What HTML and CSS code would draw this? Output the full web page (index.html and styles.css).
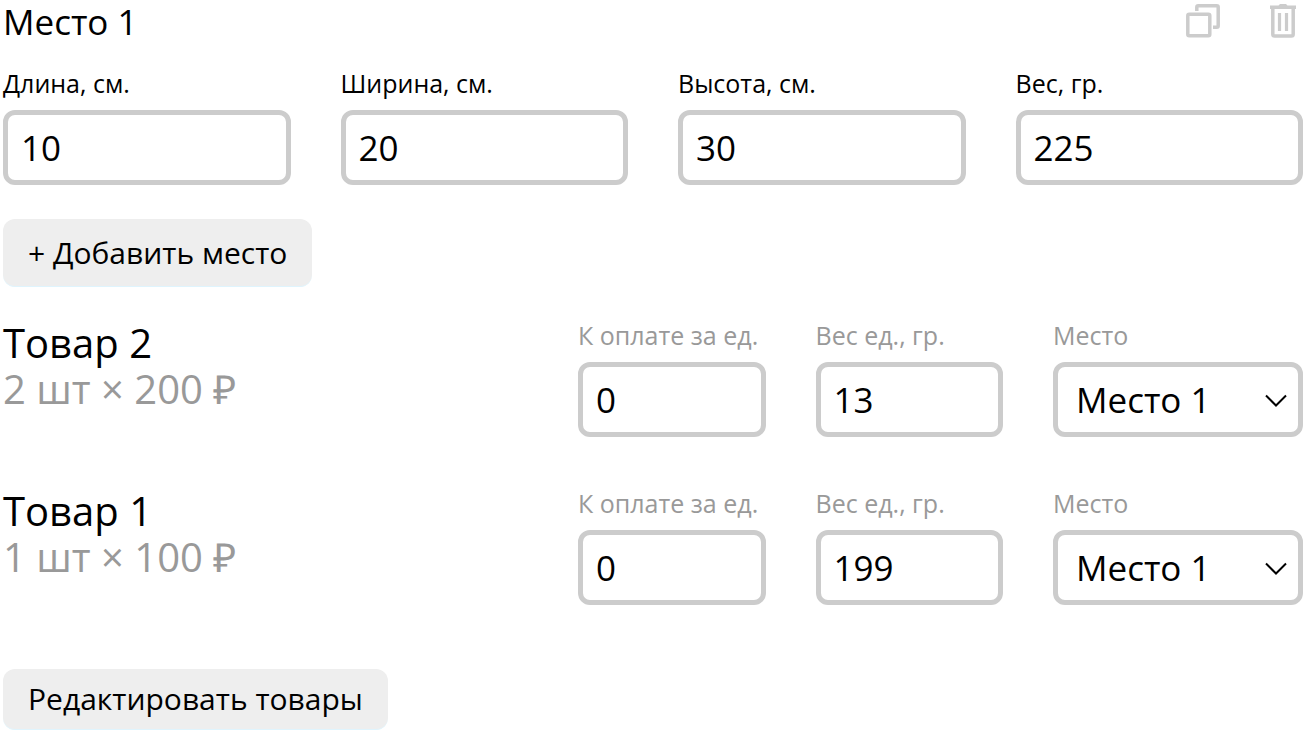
FILE: index.html
```html
<!DOCTYPE html>
<html lang="ru">
<head>
    <meta charset="UTF-8">
    <meta name="viewport" content="width=device-width, initial-scale=1.0">
    <title>Места и товары</title>
    <link rel="stylesheet" href="styles.css">
</head>
<body>

<form class="container">
    <div class="place-header">
        <h2 class="place-title">Место 1</h2>
        <div class="place-actions">
            <button type="button" class="icon-button" aria-label="Копировать место">
                <svg width="34" height="34" viewBox="0 0 34 34" fill="none" stroke="#ccc" stroke-width="3.5">
                    <rect x="1.800" y="10.200" width="22" height="21.600" rx="1.500"/>
                    <path d="M10.800 7V3.300a1.500 1.500 0 0 1 1.500-1.500h18.400a1.500 1.500 0 0 1 1.500 1.500v18.400a1.500 1.500 0 0 1-1.500 1.500H27"/>
                </svg>
            </button>
            <button type="button" class="icon-button" aria-label="Удалить место">
                <svg width="28" height="34" viewBox="0 0 28 34" fill="none" stroke="#ccc">
                    <path d="M1 1.500h8.500l1.500-1.500h6l1.500 1.500H27V5H1z" fill="#ccc" stroke="none"/>
                    <path d="M3.800 4v26.200a1.800 1.800 0 0 0 1.800 1.800h16.800a1.800 1.800 0 0 0 1.800-1.800V4" stroke-width="3.5"/>
                    <path d="M10.500 9v18M17.500 9v18" stroke-width="3.2"/>
                </svg>
            </button>
        </div>
    </div>

    <div class="place-fields">
        <div class="field">
            <label for="length">Длина, см.</label>
            <input type="text" id="length" value="10">
        </div>
        <div class="field">
            <label for="width">Ширина, см.</label>
            <input type="text" id="width" value="20">
        </div>
        <div class="field">
            <label for="height">Высота, см.</label>
            <input type="text" id="height" value="30">
        </div>
        <div class="field">
            <label for="weight">Вес, гр.</label>
            <input type="text" id="weight" value="225">
        </div>
    </div>

    <button type="button" class="button button-add">+ Добавить место</button>

    <div class="items">
        <div class="item">
            <div class="item-info">
                <div class="item-name">Товар 2</div>
                <div class="item-price">2 шт × 200 <span class="ruble">₽</span></div>
            </div>
            <div class="item-fields">
                <div class="field">
                    <label for="pay2">К оплате за ед.</label>
                    <input type="text" id="pay2" value="0">
                </div>
                <div class="field">
                    <label for="weight2">Вес ед., гр.</label>
                    <input type="text" id="weight2" value="13">
                </div>
                <div class="field">
                    <label for="place2">Место</label>
                    <div class="select">
                        <select id="place2">
                            <option>Место 1</option>
                        </select>
                        <svg class="arrow" width="22" height="14" viewBox="0 0 22 14" fill="none" stroke="#000" stroke-width="2"><path d="M1 1.500l10 10 10-10"/></svg>
                    </div>
                </div>
            </div>
        </div>

        <div class="item">
            <div class="item-info">
                <div class="item-name">Товар 1</div>
                <div class="item-price">1 шт × 100 <span class="ruble">₽</span></div>
            </div>
            <div class="item-fields">
                <div class="field">
                    <label for="pay1">К оплате за ед.</label>
                    <input type="text" id="pay1" value="0">
                </div>
                <div class="field">
                    <label for="weight1">Вес ед., гр.</label>
                    <input type="text" id="weight1" value="199">
                </div>
                <div class="field">
                    <label for="place1">Место</label>
                    <div class="select">
                        <select id="place1">
                            <option>Место 1</option>
                        </select>
                        <svg class="arrow" width="22" height="14" viewBox="0 0 22 14" fill="none" stroke="#000" stroke-width="2"><path d="M1 1.500l10 10 10-10"/></svg>
                    </div>
                </div>
            </div>
        </div>
    </div>

    <button type="button" class="button">Редактировать товары</button>
</form>

</body>
</html>
```
FILE: styles.css
```css
* { box-sizing: border-box; }
body { margin: 0; background: #fff; color: #000; font-family: "Open Sans", sans-serif; }
button, input, select { font-family: inherit; color: inherit; }
.container { padding: 0 3px 8px; }

.place-header { display: flex; justify-content: space-between; align-items: flex-start; margin-bottom: 24px; }
.place-title { margin: 0; font-size: 35px; line-height: 44px; font-weight: 400; }
.place-actions { display: flex; gap: 49px; padding: 4px 6px 0 0; }
.icon-button { display: flex; padding: 0; border: none; background: none; cursor: pointer; }

.place-fields { display: grid; grid-template-columns: repeat(4, 1fr); gap: 50px; margin-bottom: 34px; }
.field { display: flex; flex-direction: column; gap: 12px; min-width: 0; }
.field label { font-size: 25px; line-height: 30px; white-space: nowrap; }
.field input, .field select { width: 100%; height: 75px; border: 5px solid #ccc; border-radius: 12px; background: #fff; font-size: 35px; }
.field input { padding: 0 13px; }
.field select { display: block; padding: 0 40px 0 18px; appearance: none; }
.select { position: relative; }
.arrow { position: absolute; right: 16px; top: 32px; pointer-events: none; }

.button { display: block; height: 61px; padding: 0 25px 1px; border: none; border-bottom: 1px solid #dff4fd; border-radius: 12px; background: #eee; font-size: 30px; cursor: pointer; }
.button-add { height: 68px; }
.button:hover { background: #e4e4e4; }

.items { display: flex; flex-direction: column; gap: 51px; margin: 33px 0 64px; }
.item { display: grid; grid-template-columns: 23fr 29fr; }
.item-name, .item-price { font-size: 40px; line-height: 46px; }
.item-price { color: #999; }
.ruble { font-family: "Liberation Sans", sans-serif; }
.item-fields { display: grid; grid-template-columns: 3fr 3fr 4fr; gap: 50px; }
.item-fields label { color: #999; }
```
